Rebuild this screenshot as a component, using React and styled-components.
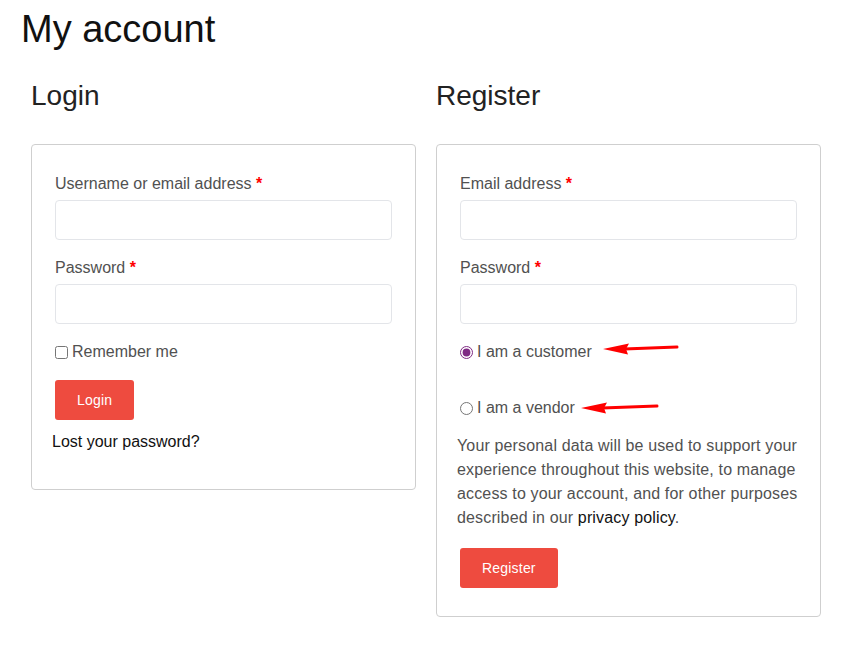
import React, { useState } from 'react';
import styled, { createGlobalStyle } from 'styled-components';

const GlobalStyle = createGlobalStyle`
  * { box-sizing: border-box; }
  body {
    margin: 0;
    background: #fff;
    font-family: "Liberation Sans", Arial, sans-serif;
    color: #515151;
  }
`;

const Page = styled.div`
  padding: 6px 21px 40px;
`;

const Title = styled.h1`
  margin: 0;
  font-size: 38px;
  line-height: 46px;
  font-weight: 400;
  color: #111;
`;

const Columns = styled.div`
  display: grid;
  grid-template-columns: 385px 385px;
  column-gap: 20px;
  margin-left: 10px;
  align-items: start;
`;

const Column = styled.div`
  display: flex;
  flex-direction: column;
`;

const Heading = styled.h2`
  margin: 27px 0 31px;
  font-size: 28px;
  line-height: 34px;
  font-weight: 400;
  color: #222;
`;

const Box = styled.form`
  border: 1px solid #cfcfcf;
  border-radius: 4px;
  padding: ${(p) => p.$padding};
`;

const Row = styled.div`
  position: relative;
  padding: 0 3px;
  margin-bottom: ${(p) => p.$gap ?? 18}px;
`;

const Label = styled.label`
  display: block;
  font-size: 16px;
  line-height: 20px;
  margin-bottom: 6px;
  color: #515151;
`;

const Required = styled.span`
  color: #f00;
  font-weight: 700;
`;

const Input = styled.input`
  display: block;
  width: 100%;
  height: 40px;
  border: 1px solid #e3e5e9;
  border-radius: 4px;
  padding: 0 12px;
  font-size: 16px;
  outline: none;
`;

const Choice = styled.label`
  display: flex;
  align-items: center;
  font-size: 16px;
  line-height: 20px;
  color: #515151;

  input {
    width: 13px;
    height: 13px;
    margin: 0 4px 0 0;
    accent-color: #7f2a84;
  }
`;

const Button = styled.button`
  display: block;
  height: 40px;
  padding: 0 ${(p) => p.$pad}px;
  border: none;
  border-radius: 3px;
  background: #ee4b3f;
  color: #fff;
  font-family: "Liberation Sans", Arial, sans-serif;
  font-size: 14px;
  font-weight: 500;
  letter-spacing: 0.2px;
  cursor: pointer;
`;

const LostLink = styled.a`
  display: block;
  margin-top: 10px;
  font-size: 16px;
  line-height: 24px;
  color: #111;
  text-decoration: none;
`;

const Privacy = styled.p`
  margin: 16px 0 18px;
  font-size: 16px;
  line-height: 24px;
  color: #515151;
  letter-spacing: 0.15px;

  a {
    color: #111;
    text-decoration: none;
  }
`;

const ArrowMark = styled.svg`
  position: absolute;
  left: ${(p) => p.$left}px;
  top: ${(p) => p.$top}px;
  overflow: visible;
`;

const Arrow = ({ left, top, width }) => (
  <ArrowMark $left={left} $top={top} width={width} height="14" viewBox={`0 0 ${width} 14`}>
    <line x1="21" y1="7" x2={width - 1} y2="5" stroke="#f00" strokeWidth="3" strokeLinecap="round" />
    <polygon points="0,7 26,1.5 23,7 25,12.5" fill="#f00" />
  </ArrowMark>
);

const App = () => {
  const [role, setRole] = useState('customer');

  return (
    <Page>
      <GlobalStyle />
      <Title>My account</Title>
      <Columns>
        <Column>
          <Heading>Login</Heading>
          <Box $padding="29px 20px 35px" onSubmit={(e) => e.preventDefault()}>
            <Row>
              <Label>Username or email address <Required>*</Required></Label>
              <Input type="text" />
            </Row>
            <Row>
              <Label>Password <Required>*</Required></Label>
              <Input type="password" />
            </Row>
            <Row>
              <Choice>
                <input type="checkbox" />
                Remember me
              </Choice>
            </Row>
            <Row $gap={0}>
              <Button type="submit" $pad={22}>Login</Button>
            </Row>
            <LostLink href="#">Lost your password?</LostLink>
          </Box>
        </Column>

        <Column>
          <Heading>Register</Heading>
          <Box $padding="29px 20px 28px" onSubmit={(e) => e.preventDefault()}>
            <Row>
              <Label>Email address <Required>*</Required></Label>
              <Input type="email" />
            </Row>
            <Row>
              <Label>Password <Required>*</Required></Label>
              <Input type="password" />
            </Row>
            <Row $gap={36}>
              <Choice>
                <input
                  type="radio"
                  name="role"
                  checked={role === 'customer'}
                  onChange={() => setRole('customer')}
                />
                I am a customer
              </Choice>
              <Arrow left={146} top={0} width={75} />
            </Row>
            <Row $gap={0}>
              <Choice>
                <input
                  type="radio"
                  name="role"
                  checked={role === 'vendor'}
                  onChange={() => setRole('vendor')}
                />
                I am a vendor
              </Choice>
              <Arrow left={124} top={3} width={77} />
            </Row>
            <Privacy>
              Your personal data will be used to support your experience throughout this
              website, to manage access to your account, and for other purposes described
              in our <a href="#">privacy policy</a>.
            </Privacy>
            <Row $gap={0}>
              <Button type="submit" $pad={22}>Register</Button>
            </Row>
          </Box>
        </Column>
      </Columns>
    </Page>
  );
};

export default App;
